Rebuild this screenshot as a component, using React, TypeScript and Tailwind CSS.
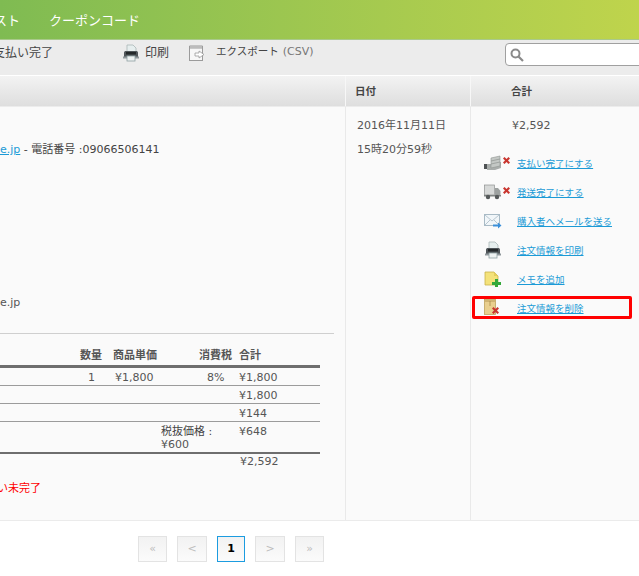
import * as React from 'react';

const FONT = "font-['DejaVu_Sans','Noto_Sans_CJK_JP',sans-serif]";

function RedX({ x, y }: { x: number; y: number }) {
  return (
    <g transform={`translate(${x} ${y})`}>
      <path d="M0 1.5 L1.5 0 L3.5 2 L5.5 0 L7 1.5 L5 3.5 L7 5.5 L5.5 7 L3.5 5 L1.5 7 L0 5.5 L2 3.5 Z" fill="#c9352e" />
    </g>
  );
}

function PrinterIcon({ className }: { className?: string }) {
  return (
    <svg viewBox="0 0 18 18" className={className}>
      <path d="M5 1h6l3 3v5H5z" fill="#e6eeee" stroke="#a9b6b6" strokeWidth="0.8" />
      <path d="M2 8.5 C2 7.5 3 7 4 7h10c1 0 2 .5 2 1.5V14H2z" fill="#50565a" />
      <rect x="4" y="8" width="10" height="2.5" fill="#24282a" />
      <path d="M1 12.5h16v2H1z" fill="#8f979b" />
      <rect x="5" y="12" width="8" height="5" fill="#eef2f2" stroke="#8fa0a3" strokeWidth="0.8" />
    </svg>
  );
}

function ExportIcon() {
  return (
    <svg viewBox="0 0 18 18" className="w-4.5 h-4.5 shrink-0">
      <path d="M1.5 2h13v3h-13z" fill="#dcdcdc" stroke="#9b9b9b" />
      <rect x="1.5" y="4" width="13" height="12.5" fill="#f7f7f7" stroke="#9b9b9b" />
      <path d="M7 9h4V7l5 3.5-5 3.500v-2H7z" fill="#fff" stroke="#9b9b9b" strokeWidth="0.8" />
    </svg>
  );
}

function MoneyIcon() {
  return (
    <svg viewBox="0 0 28 16" className="w-7 h-4">
      <rect x="0" y="9" width="3" height="5" fill="#4e5254" />
      <path d="M3 9h5l4-2h5v6l-6 2H3z" fill="#a9adab" />
      <path d="M7 3l9-2v10l-9 2z" fill="#c4c8c5" stroke="#8f9491" strokeWidth="0.6" />
      <path d="M7 6l9-2M7 9l9-2" stroke="#8f9491" strokeWidth="0.7" />
      <RedX x={19} y={2} />
    </svg>
  );
}

function TruckIcon() {
  return (
    <svg viewBox="0 0 28 16" className="w-7 h-4">
      <rect x="0.5" y="1" width="10" height="10" fill="#d7d9d8" stroke="#8d9190" strokeWidth="0.7" />
      <path d="M11 4h3l2.5 3v5H11z" fill="#9da1a0" />
      <rect x="0" y="11" width="17" height="1.5" fill="#7f8382" />
      <circle cx="4" cy="13" r="2.2" fill="#55595a" />
      <circle cx="13" cy="13" r="2.2" fill="#55595a" />
      <RedX x={19} y={3} />
    </svg>
  );
}

function MailIcon() {
  return (
    <svg viewBox="0 0 18 16" className="w-4.5 h-4">
      <rect x="0.5" y="1.500" width="15" height="11" fill="#f1f6f9" stroke="#a8bac5" />
      <path d="M1 2l7 6 7-6M1 12l5-5M15 12l-5-5" fill="none" stroke="#a8bac5" strokeWidth="0.8" />
      <path d="M9 11.500h5V9.500l3.500 3-3.500 3v-2H9z" fill="#3b8fd9" />
    </svg>
  );
}

function NoteIcon() {
  return (
    <svg viewBox="0 0 18 16" className="w-4.5 h-4">
      <path d="M1 1h9l4 4v9H1z" fill="#f4e27a" stroke="#c9b24a" strokeWidth="0.8" />
      <path d="M10 1v4h4z" fill="#e3cd5c" />
      <path d="M11 8h3v3h3v3h-3v2h-3v-2H8v-3h3z" fill="#33a83a" />
    </svg>
  );
}

function TrashIcon() {
  return (
    <svg viewBox="0 0 18 17" className="w-4.5 h-[17px]">
      <rect x="0.5" y="0.5" width="11" height="15" fill="#e9cf8e" stroke="#bfa25c" strokeWidth="0.8" />
      <path d="M1 2h10M6 2v5" stroke="#a88c4c" strokeWidth="0.8" fill="none" />
      <RedX x={8} y={8} />
    </svg>
  );
}

const actions = [
  { icon: <MoneyIcon />, label: '支払い完了にする' },
  { icon: <TruckIcon />, label: '発送完了にする' },
  { icon: <MailIcon />, label: '購入者へメールを送る' },
  { icon: <PrinterIcon className="w-4.5 h-4.5" />, label: '注文情報を印刷' },
  { icon: <NoteIcon />, label: 'メモを追加' },
];

const rowCols = 'grid grid-cols-[80px_33px_47px_39px_40px_81px] w-[320px] text-[11px] text-[#555]';

function Pager({ label, w, active }: { label: string; w: string; active?: boolean }) {
  return (
    <div
      className={`${w} h-[26px] flex items-center justify-center border bg-gradient-to-b from-[#f2f2f2] to-[#fbfbfb] ${
        active ? 'border-[#1c9ce0] text-black font-bold text-[11px]' : 'border-[#e3e3e3] text-[#bdbdbd] text-[11px]'
      }`}
    >
      {label}
    </div>
  );
}

export default function App() {
  return (
    <div className={`w-[639px] h-[576px] overflow-hidden bg-white flex flex-col ${FONT}`}>
      <div className="h-[40px] shrink-0 flex items-center pt-[2px] bg-gradient-to-r from-[#7fbb52] to-[#bfd44c] border-b border-[#a9c98b] text-white text-[13px]">
        <span className="-ml-[19px] w-[68px] shrink-0">リスト</span>
        <span>クーポンコード</span>
      </div>

      <div className="h-[36px] shrink-0 flex items-center pb-[6px] bg-[#ececec] border-b border-white text-[12px] text-[#444]">
        <span className="-ml-[7px] w-[129px] shrink-0 mb-[4px] whitespace-nowrap">支払い完了</span>
        <PrinterIcon className="w-4.5 h-4.5 shrink-0 mb-[4px]" />
        <span className="ml-[5px] mb-[4px] shrink-0 whitespace-nowrap">印刷</span>
        <div className="ml-[19px] shrink-0 mb-[4px]">
          <ExportIcon />
        </div>
        <span className="ml-[10px] mb-[4px] shrink-0 whitespace-nowrap text-[10.5px]">
          エクスポート
          <span className="ml-[4px] text-[11px] text-[#777]">(CSV)</span>
        </span>
        <div className="ml-[192px] w-[150px] h-[23px] shrink-0 flex items-center bg-white border border-[#a0a0a0] rounded-[4px] pl-[4px]">
          <svg viewBox="0 0 14 14" className="w-3.5 h-3.5">
            <circle cx="5.5" cy="5.5" r="4" fill="none" stroke="#8a8a8a" strokeWidth="2" />
            <path d="M8.5 8.5L13 13" stroke="#8a8a8a" strokeWidth="2.2" />
          </svg>
        </div>
      </div>

      <div className="h-[31px] shrink-0 flex bg-gradient-to-b from-[#f3f3f3] to-[#dedede] border-b border-[#ececec] text-[10.5px] font-bold text-[#444]">
        <div className="w-[346px] border-r border-[#f7f7f7]" />
        <div className="w-[125px] border-r border-[#f7f7f7] pl-[9px] pt-[2px] flex items-center">日付</div>
        <div className="flex-1 pl-[40px] pt-[2px] flex items-center">合計</div>
      </div>

      <div className="h-[414px] shrink-0 flex bg-[#fafafa] border-b border-[#ebebeb]">
        <div className="w-[346px] border-r border-[#e9e9e9] flex flex-col text-[11px] text-[#444]">
          <div className="pt-[35px] h-[188px] whitespace-nowrap">
            <a className="text-[#1b9ad6] underline">e.jp</a>
            <span> - 電話番号 :09066506141</span>
          </div>
          <div className="h-[38px] text-[#555]">e.jp</div>
          <div className="w-[334px] border-t border-[#cfcfcf] h-[14px]" />
          <div className={`${rowCols} font-bold text-[#444] h-[18px] items-center pt-[1px]`}>
            <span />
            <span>数量</span>
            <span className="col-span-2">商品単価</span>
            <span className="whitespace-nowrap">消費税</span>
            <span className="whitespace-nowrap">合計</span>
          </div>
          <div className={`${rowCols} h-[20px] items-center pt-[2px] border-t-[3px] border-[#6e6e6e]`}>
            <span />
            <span className="pl-[8px]">1</span>
            <span className="col-span-2 pl-[2px]">¥1,800</span>
            <span className="pl-[8px]">8%</span>
            <span>¥1,800</span>
          </div>
          <div className={`${rowCols} h-[18px] items-center pt-[2px] border-t border-[#9b9b9b]`}>
            <span className="col-start-6">¥1,800</span>
          </div>
          <div className={`${rowCols} h-[18px] items-center pt-[2px] border-t border-[#9b9b9b]`}>
            <span className="col-start-6">¥144</span>
          </div>
          <div className={`${rowCols} h-[31px] items-start border-t border-[#9b9b9b] leading-[13px] pt-[3px]`}>
            <span className="col-start-4 col-span-2 pl-[1px]">
              <span className="text-[#444]">税抜価格 :</span>
              <br />
              ¥600
            </span>
            <span>¥648</span>
          </div>
          <div className={`${rowCols} h-[17px] items-center border-t-[2px] border-[#6e6e6e]`}>
            <span className="col-start-6 pl-[1px]">¥2,592</span>
          </div>
          <div className="mt-[12px] -ml-[25px] text-[#f00] text-[11px] whitespace-nowrap">支払い未完了</div>
        </div>

        <div className="w-[125px] border-r border-[#e9e9e9] pl-[11px] pt-[11px] text-[11px] text-[#555] leading-[16px]">
          <div className="whitespace-nowrap">2016年11月11日</div>
          <div className="mt-[8px] whitespace-nowrap">15時20分59秒</div>
        </div>

        <div className="flex-1 flex flex-col">
          <div className="pl-[41px] pt-[11px] text-[11px] text-[#555] leading-[16px] h-[41px]">¥2,592</div>
          <div className="pl-[13px] flex flex-col">
            {actions.map((a) => (
              <div key={a.label} className="h-[29px] flex items-center">
                <div className="w-[28px] flex items-center">{a.icon}</div>
                <a className="ml-[5px] mt-[3px] text-[9.5px] text-[#1b9ad6] underline whitespace-nowrap">{a.label}</a>
              </div>
            ))}
          </div>
          <div className="ml-[1px] mt-[3px] w-[160px] h-[23px] flex items-center border-[3px] border-[#f00] rounded-[2px] pl-[9px]">
            <div className="w-[28px] flex items-center">
              <TrashIcon />
            </div>
            <a className="ml-[5px] mt-[3px] text-[9.5px] text-[#1b9ad6] underline whitespace-nowrap">注文情報を削除</a>
          </div>
        </div>
      </div>

      <div className="flex-1 flex items-start pt-[15px] pl-[138px] gap-[10px]">
        <Pager label="«" w="w-[29px]" />
        <Pager label="<" w="w-[30px]" />
        <Pager label="1" w="w-[28px]" active />
        <Pager label=">" w="w-[30px]" />
        <Pager label="»" w="w-[29px]" />
      </div>
    </div>
  );
}
